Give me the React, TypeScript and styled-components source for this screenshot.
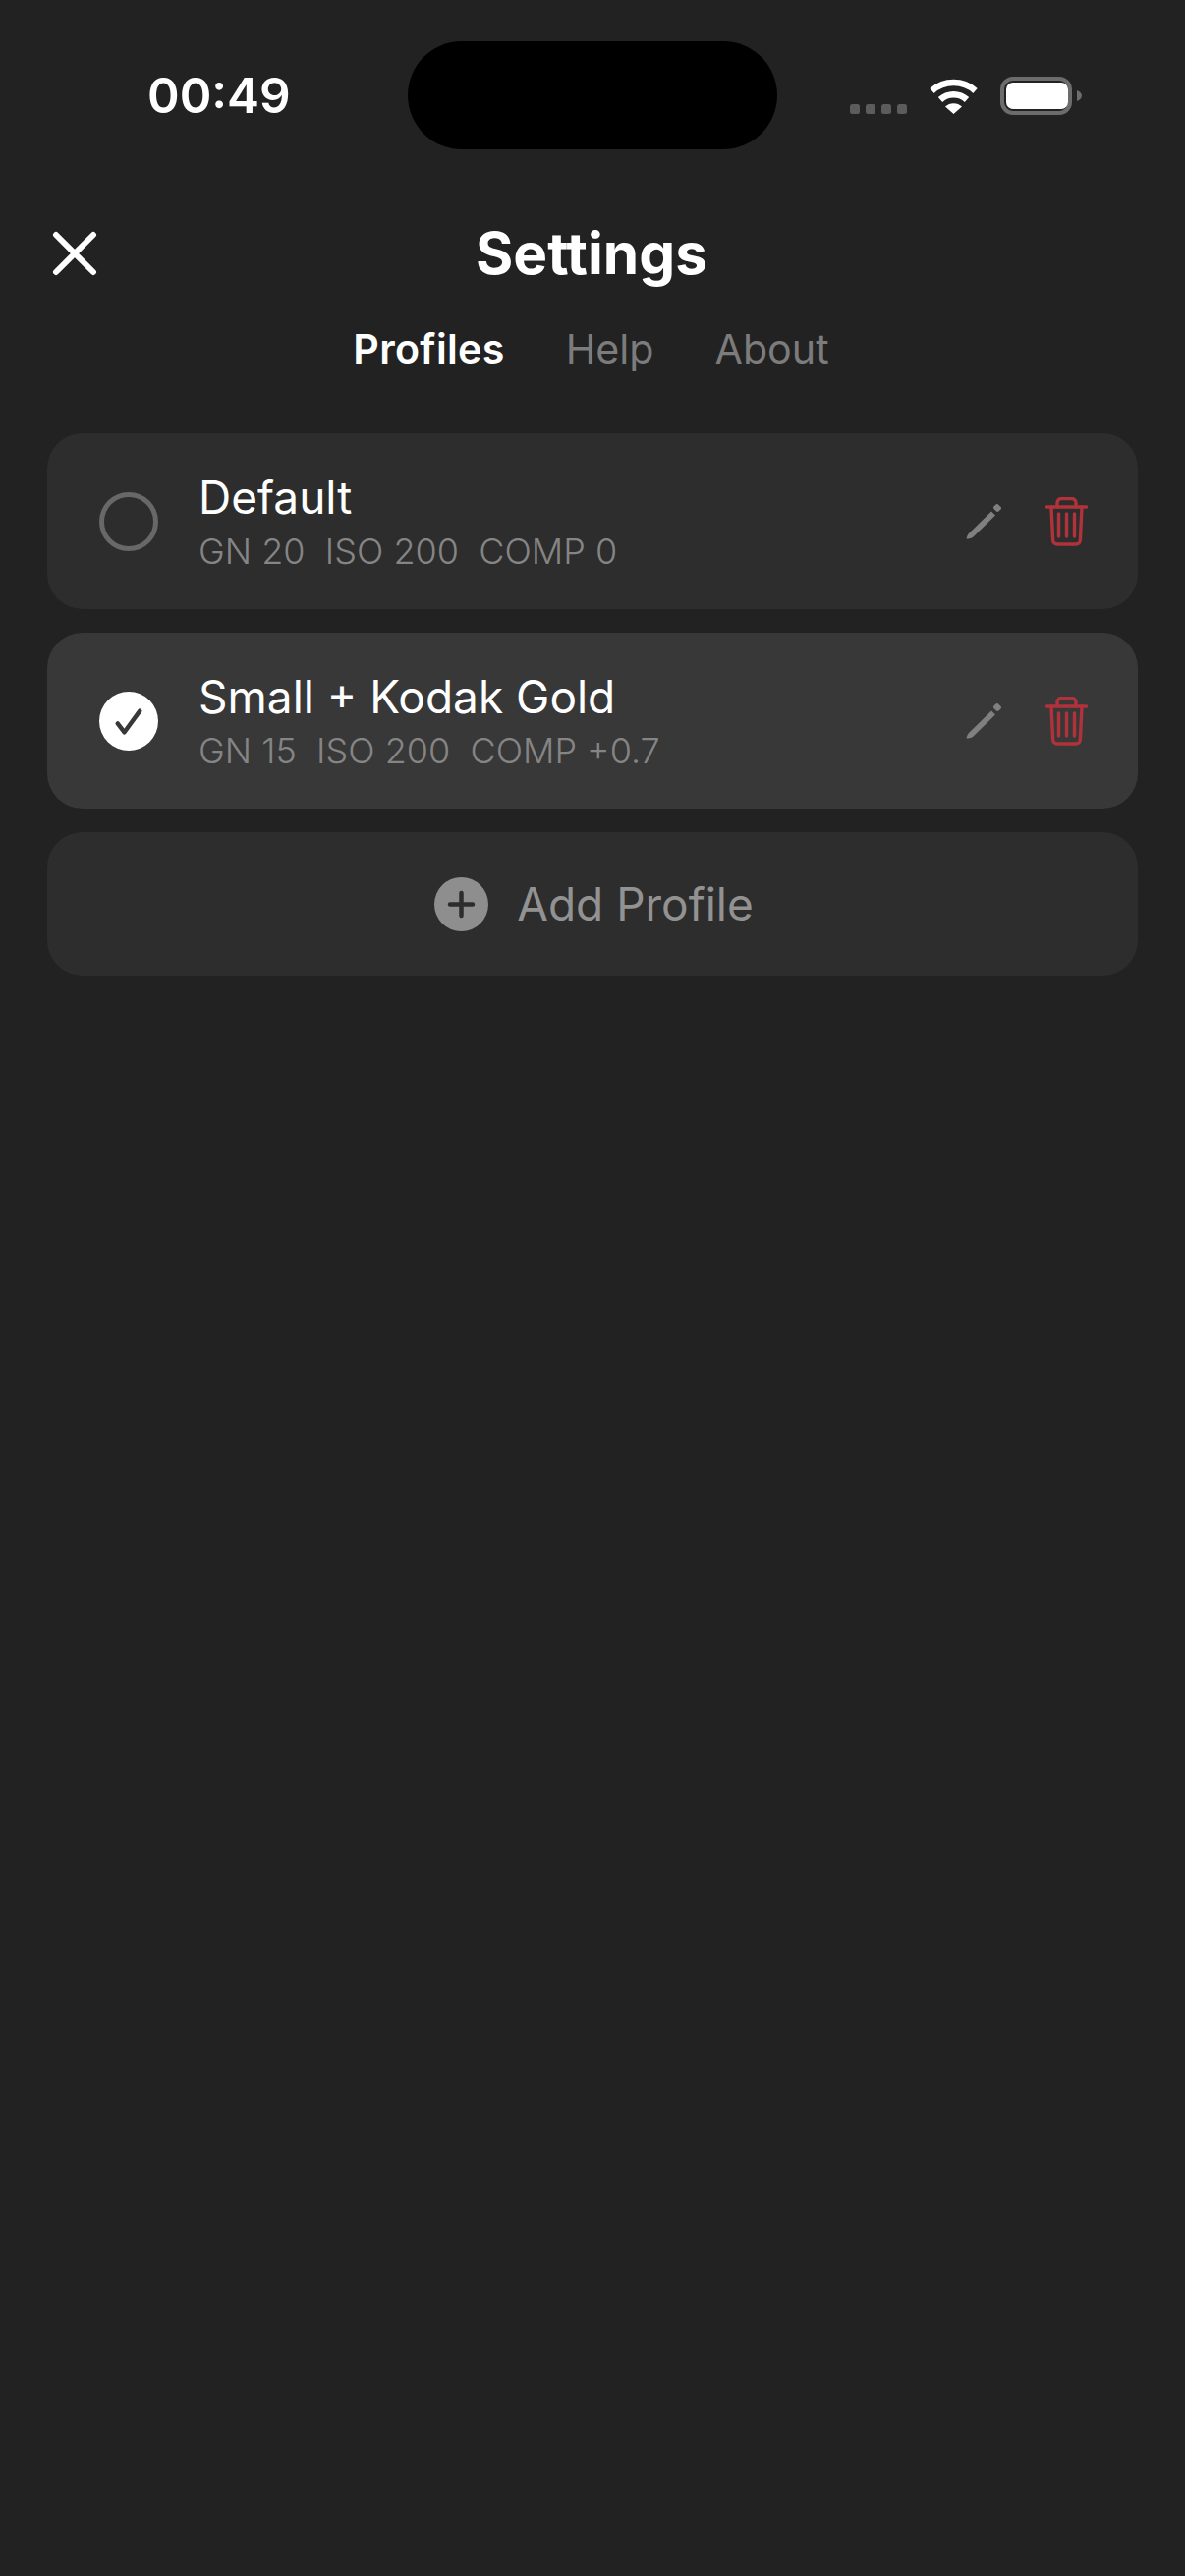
import React from "react";
import styled, { createGlobalStyle } from "styled-components";

const Global = createGlobalStyle`
  html, body { margin: 0; padding: 0; background: #222222; }
  body { font-family: Inter, "Noto Sans", sans-serif; color: #fff; -webkit-font-smoothing: antialiased; }
`;

const Page = styled.div`
  min-height: 100vh;
  background: #222222;
  display: flex;
  flex-direction: column;
`;

const StatusBar = styled.div`
  height: 110px;
  padding-top: 42px;
  display: grid;
  grid-template-columns: 415px 376px 1fr;
`;
const Time = styled.div`
  font-size: 49.5px;
  font-weight: 600;
  line-height: 110px;
  padding-left: 150px;
  white-space: nowrap;
`;
const Island = styled.div`
  background: #000;
  border-radius: 55px;
`;
const StatusIcons = styled.div`
  display: flex;
  align-items: center;
  padding-left: 74px;
`;
const Signal = styled.svg`
  width: 58px;
  height: 37px;
  margin-right: 22px;
  display: block;
`;
const Wifi = styled.svg`
  width: 51px;
  height: 37px;
  margin-right: 22px;
  display: block;
`;
const Battery = styled.svg`
  width: 83px;
  height: 39px;
  display: block;
`;

const Header = styled.div`
  height: 92px;
  margin-top: 60px;
  padding: 0 55px 0 53px;
  display: grid;
  grid-template-columns: 1fr auto 1fr;
  align-items: center;
`;
const CloseIcon = styled.svg`
  width: 46px;
  height: 46px;
  display: block;
`;
const Title = styled.h1`
  margin: 0;
  font-size: 58.5px;
  font-weight: 700;
  line-height: 68px;
`;

const Tabs = styled.div`
  margin-top: 21px;
  padding-right: 3px;
  height: 60px;
  display: flex;
  justify-content: center;
  align-items: center;
  gap: 62px;
`;
const Tab = styled.div<{ $active?: boolean }>`
  font-size: 41.2px;
  font-weight: ${(p) => (p.$active ? 600 : 400)};
  letter-spacing: ${(p) => (p.$active ? "0.3px" : "0")};
  color: ${(p) => (p.$active ? "#ffffff" : "#7c7c7c")};
`;

const List = styled.div`
  margin-top: 56px;
  padding: 0 48px;
  display: flex;
  flex-direction: column;
  gap: 24px;
`;
const Card = styled.div<{ $active?: boolean }>`
  height: 179px;
  box-sizing: border-box;
  padding: 0 51px 0 53px;
  border-radius: 36px;
  background: ${(p) => (p.$active ? "#383838" : "#2d2d2d")};
  display: flex;
  align-items: center;
`;
const RadioOff = styled.div`
  width: 60px;
  height: 60px;
  box-sizing: border-box;
  border: 5px solid #686868;
  border-radius: 50%;
  flex: none;
`;
const RadioOn = styled.svg`
  width: 60px;
  height: 60px;
  flex: none;
  display: block;
`;
const Info = styled.div`
  margin-left: 41px;
  flex: 1;
  display: flex;
  flex-direction: column;
  gap: 5px;
`;
const Name = styled.div`
  font-size: 46px;
  font-weight: 400;
  line-height: 56px;
  margin-top: -1px;
`;
const Meta = styled.div`
  font-size: 36px;
  font-weight: 300;
  line-height: 44px;
  color: #858585;
  white-space: pre;
`;
const Pencil = styled.svg`
  width: 36px;
  height: 36px;
  display: block;
  flex: none;
`;
const Trash = styled.svg`
  width: 43px;
  height: 50px;
  margin-left: 45px;
  display: block;
  flex: none;
`;
const AddCard = styled.div`
  height: 146px;
  box-sizing: border-box;
  padding-left: 3px;
  border-radius: 36px;
  background: #2d2d2d;
  display: flex;
  align-items: center;
  justify-content: center;
  gap: 29px;
`;
const PlusIcon = styled.svg`
  width: 55px;
  height: 55px;
  display: block;
`;
const AddLabel = styled.div`
  font-size: 46px;
  font-weight: 400;
  color: #929292;
`;

const PencilIcon = () => (
  <Pencil viewBox="0 0 36 36">
    <path d="M0.5 35.5C1 33 2 31 3 30L26 7.5L30 11.5L7 34C5 35 3 35.5 0.5 35.5Z" fill="#808080" />
    <rect x="28.5" y="0.8" width="7" height="6.4" rx="2" transform="rotate(45 32 4)" fill="#808080" />
  </Pencil>
);

const TrashIcon = () => (
  <Trash viewBox="0 0 43 50" fill="none" stroke="#b0323a" strokeWidth="3.4" strokeLinecap="round" strokeLinejoin="round">
    <path d="M1.5 10H41.5" />
    <path d="M12 10V6a4.5 4.5 0 0 1 4.5-4.5h10A4.5 4.5 0 0 1 31 6v4" />
    <path d="M6 10l1.6 33.5a4.5 4.5 0 0 0 4.5 4.5h18.8a4.5 4.5 0 0 0 4.5-4.5L37 10" />
    <path d="M13.5 17v23M21.5 17v23M29.5 17v23" />
  </Trash>
);

const profiles = [
  { name: "Default", meta: "GN 20  ISO 200  COMP 0", active: false },
  { name: "Small + Kodak Gold", meta: "GN 15  ISO 200  COMP +0.7", active: true },
];

export default function App() {
  return (
    <Page>
      <Global />
      <StatusBar>
        <Time>00:49</Time>
        <Island />
        <StatusIcons>
          <Signal viewBox="0 0 58 37">
            {[0, 16, 32, 48].map((x) => (
              <rect key={x} x={x} y="27" width="10" height="10" rx="2.5" fill="#5c5c5c" />
            ))}
          </Signal>
          <Wifi viewBox="0 0 51 37" fill="none" stroke="#fff">
            <path d="M3.5 13.5A33 33 0 0 1 47.5 13.5" strokeWidth="6.5" />
            <path d="M12 22.5A20 20 0 0 1 39 22.5" strokeWidth="6.5" />
            <path d="M25.5 37L17 29.5A12.5 12.5 0 0 1 34 29.5Z" fill="#fff" stroke="none" />
          </Wifi>
          <Battery viewBox="0 0 83 39">
            <rect x="2" y="2" width="69" height="35" rx="11" fill="none" stroke="#6c6c6c" strokeWidth="4" />
            <rect x="6" y="6" width="63" height="27" rx="7" fill="#fff" />
            <path d="M78 14c3 1 5 3 5 5.5s-2 4.500-5 5.500Z" fill="#6c6c6c" />
          </Battery>
        </StatusIcons>
      </StatusBar>
      <Header>
        <CloseIcon viewBox="0 0 46 46" stroke="#fff" strokeWidth="6" strokeLinecap="round">
          <path d="M4 4L42 42M42 4L4 42" />
        </CloseIcon>
        <Title>Settings</Title>
      </Header>
      <Tabs>
        <Tab $active>Profiles</Tab>
        <Tab>Help</Tab>
        <Tab>About</Tab>
      </Tabs>
      <List>
        {profiles.map((p) => (
          <Card key={p.name} $active={p.active}>
            {p.active ? (
              <RadioOn viewBox="0 0 61 61">
                <circle cx="30.5" cy="30.5" r="30.5" fill="#fff" />
                <path d="M19 33L26 42L42 20" fill="none" stroke="#383838" strokeWidth="4.500" strokeLinecap="round" strokeLinejoin="round" />
              </RadioOn>
            ) : (
              <RadioOff />
            )}
            <Info>
              <Name>{p.name}</Name>
              <Meta>{p.meta}</Meta>
            </Info>
            <PencilIcon />
            <TrashIcon />
          </Card>
        ))}
        <AddCard>
          <PlusIcon viewBox="0 0 55 55">
            <circle cx="27.5" cy="27.5" r="27.5" fill="#8e8e8e" />
            <path d="M27.5 16V39M16 27.5H39" stroke="#2d2d2d" strokeWidth="4.500" strokeLinecap="round" />
          </PlusIcon>
          <AddLabel>Add Profile</AddLabel>
        </AddCard>
      </List>
    </Page>
  );
}
